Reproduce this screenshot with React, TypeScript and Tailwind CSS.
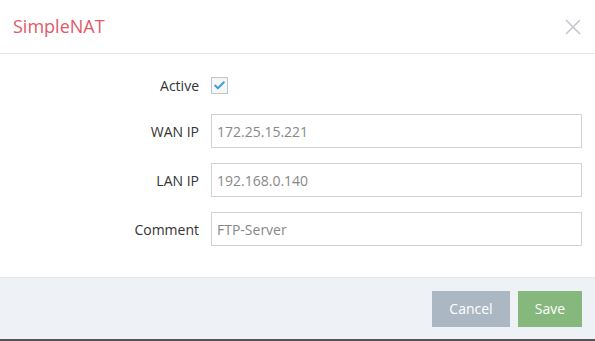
import { Check, X } from "lucide-react"

const fields = [
    { label: "WAN IP", value: "172.25.15.221" },
    { label: "LAN IP", value: "192.168.0.140" },
    { label: "Comment", value: "FTP-Server" },
]

export default function App() {
    return (
        <div className="w-[595px] h-[341px] bg-white flex flex-col font-['Open_Sans',sans-serif] text-[14px] text-[#333] border-b-2 border-[#555]">
            <div className="h-[54px] flex items-center justify-between pl-[13px] pr-[9px] border-b border-[#e3e5e8]">
                <span className="text-[18px] text-[#e05a68]">SimpleNAT</span>
                <X className="w-[26px] h-[26px] text-[#c6cacf]" strokeWidth={1.6} />
            </div>

            <div className="flex-1 flex flex-col pt-[23px] pr-[13px] gap-[15px]">
                <div className="flex items-center h-[16px] mb-[6px]">
                    <label className="w-[199px] text-right pr-0">Active</label>
                    <div className="ml-[12px] w-[17px] h-[17px] border border-[#bfc6cc] bg-[#f4f6f8] flex items-center justify-center">
                        <Check className="w-[13px] h-[13px] text-[#3a9fd5]" strokeWidth={3.5} />
                    </div>
                </div>

                {fields.map((f) => (
                    <div key={f.label} className="flex items-center">
                        <label className="w-[199px] text-right">{f.label}</label>
                        <div className="ml-[12px] flex-1 h-[34px] border border-[#cfd3d6] flex items-center px-[5px] text-[#888]">
                            {f.value}
                        </div>
                    </div>
                ))}
            </div>

            <div className="h-[62px] bg-[#eef1f6] border-t border-[#e2e5ea] flex items-center justify-end gap-[8px] pr-[13px]">
                <button className="w-[78px] h-[36px] bg-[#abb8c3] text-white">Cancel</button>
                <button className="w-[64px] h-[36px] bg-[#86b87e] text-white">Save</button>
            </div>
        </div>
    )
}
